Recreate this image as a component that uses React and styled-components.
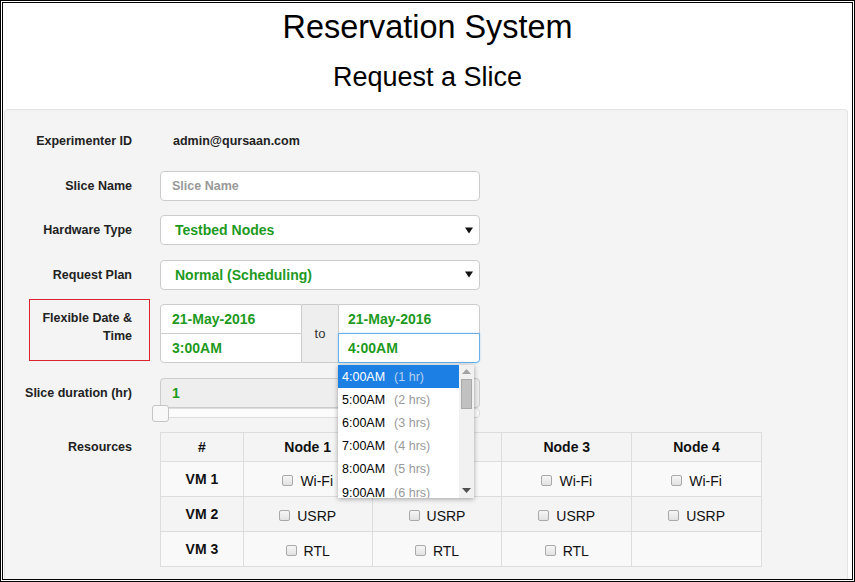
import React from "react";
import styled, { createGlobalStyle } from "styled-components";

const GREEN = "#1e9a1e";

const GlobalStyle = createGlobalStyle`
  html, body {
    margin: 0;
    padding: 0;
    background: #fff;
  }
  body {
    font-family: "Liberation Sans", Arial, sans-serif;
    color: #222;
  }
  * {
    box-sizing: border-box;
  }
`;

const Frame = styled.div`
  width: 855px;
  height: 582px;
  border: 3px double #000;
  display: flex;
  flex-direction: column;
  overflow: hidden;
  background: #fff;
`;

const Title = styled.h1`
  margin: 7px 0 0;
  font-size: 32.4px;
  line-height: 34px;
  font-weight: normal;
  text-align: center;
  color: #000;
`;

const Subtitle = styled.h2`
  margin: 18px 0 0;
  font-size: 27px;
  line-height: 30px;
  font-weight: normal;
  text-align: center;
  color: #000;
`;

const Panel = styled.div`
  flex: 1;
  margin: 17px 4px 3px 1px;
  background: #f4f4f4;
  border: 1px solid #e3e3e3;
  border-bottom: none;
  border-radius: 4px 4px 0 0;
  padding: 16px 0 0 24px;
`;

const Row = styled.div`
  display: grid;
  grid-template-columns: 121px 1fr;
  column-gap: 10px;
  align-items: ${(p) => (p.$top ? "start" : "center")};
  margin-bottom: ${(p) => p.$gap || "14.5px"};
  min-height: 30px;
`;

const Label = styled.div`
  display: flex;
  justify-content: flex-end;
  align-items: center;
  min-height: ${(p) => p.$h || "30px"};
  padding-right: 18px;
  font-size: 12.5px;
  font-weight: bold;
  white-space: nowrap;
  color: #222;
`;

const BoxedLabel = styled.div`
  height: 62px;
  margin-top: -5px;
  border: 1px solid #d9262e;
  padding: 9px 17px 0 0;
  text-align: right;
  font-size: 12.5px;
  line-height: 18px;
  font-weight: bold;
  color: #222;
`;

const Value = styled.div`
  padding-left: 13px;
  font-size: 12.5px;
  font-weight: bold;
  color: #222;
`;

const TextInput = styled.input`
  width: 320px;
  height: 30px;
  border: 1px solid #ccc;
  border-radius: 4px;
  background: #fff;
  padding: 0 11px;
  font-family: inherit;
  font-size: 12.5px;
  font-weight: bold;
  outline: none;
  &::placeholder {
    color: #999;
  }
`;

const Select = styled.div`
  width: 320px;
  height: 30px;
  border: 1px solid #ccc;
  border-radius: 4px;
  background: #fff;
  display: flex;
  align-items: center;
  justify-content: space-between;
  padding: 0 6px 0 14px;
  font-size: 14px;
  font-weight: bold;
  color: ${GREEN};
`;

const Caret = () => (
  <svg width="8" height="7" viewBox="0 0 8 7">
    <path d="M0 0.5 L8 0.5 L4 6.5 Z" fill="#111" />
  </svg>
);

const DateGroup = styled.div`
  display: flex;
  width: 320px;
`;

const DateCol = styled.div`
  position: relative;
  display: flex;
  flex-direction: column;
  width: 142px;
`;

const DateField = styled.div`
  position: relative;
  height: 30px;
  margin-top: ${(p) => (p.$second ? "-1px" : "0")};
  border: 1px solid ${(p) => (p.$focus ? "#66afe9" : "#ccc")};
  border-radius: ${(p) => p.$radius || "0"};
  background: #fff;
  display: flex;
  align-items: center;
  padding-left: ${(p) => p.$pad || "11px"};
  font-size: 14px;
  font-weight: bold;
  color: ${GREEN};
  z-index: ${(p) => (p.$focus ? 2 : 1)};
  box-shadow: ${(p) => (p.$focus ? "0 0 2px rgba(102,175,233,0.5)" : "none")};
`;

const Addon = styled.div`
  width: 36px;
  background: #eee;
  border-top: 1px solid #ccc;
  border-bottom: 1px solid #ccc;
  display: flex;
  align-items: center;
  justify-content: center;
  font-size: 13px;
  color: #333;
`;

const Menu = styled.div`
  position: absolute;
  top: 61px;
  left: 0;
  width: 136px;
  height: 133px;
  background: #fff;
  box-shadow: 0 1px 5px rgba(0, 0, 0, 0.35);
  display: flex;
  overflow: hidden;
  z-index: 10;
`;

const MenuList = styled.div`
  flex: 1;
`;

const MenuItem = styled.div`
  height: 23.2px;
  display: flex;
  align-items: center;
  padding-left: 4px;
  font-size: 12.5px;
  white-space: nowrap;
  background: ${(p) => (p.$active ? "#1c7fe4" : "transparent")};
  color: ${(p) => (p.$active ? "#fff" : "#000")};
`;

const Hours = styled.span`
  margin-left: 9px;
  color: ${(p) => (p.$active ? "#b8d0ef" : "#999")};
`;

const Scrollbar = styled.div`
  position: relative;
  width: 15px;
  background: #f1f1f1;
  display: flex;
  flex-direction: column;
  align-items: center;
`;

const Thumb = styled.div`
  position: absolute;
  top: 14px;
  left: 2px;
  width: 11px;
  height: 30px;
  background: #c1c1c1;
  border: 1px solid #a9a9a9;
`;

const Arrow = ({ up, color }) => (
  <svg width="9" height="5" viewBox="0 0 9 5" style={{ margin: up ? "4px 0 0" : "auto 0 5px" }}>
    <path d={up ? "M0 5 L9 5 L4.5 0 Z" : "M0 0 L9 0 L4.5 5 Z"} fill={color} />
  </svg>
);

const Duration = styled.div`
  width: 320px;
`;

const DurationInput = styled.div`
  height: 30px;
  border: 1px solid #ccc;
  border-radius: 4px;
  background: #eee;
  display: flex;
  align-items: center;
  padding-left: 11px;
  font-size: 14px;
  font-weight: bold;
  color: ${GREEN};
`;

const Track = styled.div`
  position: relative;
  height: 10px;
  border: 1px solid #ddd;
  border-radius: 4px;
  background: #fcfcfc;
`;

const Handle = styled.div`
  position: absolute;
  left: -9px;
  top: -4px;
  width: 17px;
  height: 17px;
  border: 1px solid #c5c5c5;
  border-radius: 3px;
  background: #f8f8f8;
`;

const Table = styled.table`
  border-collapse: collapse;
  width: 602px;
  font-size: 14px;
  color: #111;
`;

const Th = styled.th`
  width: ${(p) => p.$w || "auto"};
  height: 29px;
  padding: 0;
  border: 1px solid #ddd;
  text-align: center;
  font-weight: bold;
`;

const Tr = styled.tr`
  background: ${(p) => (p.$odd ? "#f9f9f9" : "transparent")};
`;

const Td = styled.td`
  height: 35px;
  padding: 0;
  border: 1px solid #ddd;
  text-align: center;
  vertical-align: middle;
  font-weight: ${(p) => (p.$bold ? "bold" : "normal")};
`;

const Check = styled.label`
  display: inline-flex;
  align-items: center;
  gap: 7px;
  padding-top: 4px;
`;

const Box = styled.span`
  display: inline-block;
  width: 11px;
  height: 11px;
  border: 1px solid #a9a9a9;
  border-radius: 2px;
  background: linear-gradient(#f6f6f6, #e2e2e2);
`;

const options = [
  ["4:00AM", "(1 hr)"],
  ["5:00AM", "(2 hrs)"],
  ["6:00AM", "(3 hrs)"],
  ["7:00AM", "(4 hrs)"],
  ["8:00AM", "(5 hrs)"],
  ["9:00AM", "(6 hrs)"],
];

const resources = [
  ["VM 1", ["Wi-Fi", "Wi-Fi", "Wi-Fi", "Wi-Fi"]],
  ["VM 2", ["USRP", "USRP", "USRP", "USRP"]],
  ["VM 3", ["RTL", "RTL", "RTL", null]],
];

const App = () => (
  <Frame>
    <GlobalStyle />
    <Title>Reservation System</Title>
    <Subtitle>Request a Slice</Subtitle>
    <Panel>
      <Row>
        <Label>Experimenter ID</Label>
        <Value>admin@qursaan.com</Value>
      </Row>
      <Row>
        <Label>Slice Name</Label>
        <TextInput placeholder="Slice Name" />
      </Row>
      <Row>
        <Label>Hardware Type</Label>
        <Select>
          Testbed Nodes
          <Caret />
        </Select>
      </Row>
      <Row>
        <Label>Request Plan</Label>
        <Select>
          Normal (Scheduling)
          <Caret />
        </Select>
      </Row>
      <Row $top>
        <BoxedLabel>Flexible Date &amp; Time</BoxedLabel>
        <DateGroup>
          <DateCol>
            <DateField $radius="4px 0 0 0">21-May-2016</DateField>
            <DateField $second $radius="0 0 0 4px">3:00AM</DateField>
          </DateCol>
          <Addon>to</Addon>
          <DateCol>
            <DateField $radius="0 4px 0 0" $pad="9px">21-May-2016</DateField>
            <DateField $second $focus $radius="0 0 4px 0" $pad="9px">4:00AM</DateField>
            <Menu>
              <MenuList>
                {options.map(([time, hrs], i) => (
                  <MenuItem key={time} $active={i === 0}>
                    {time}
                    <Hours $active={i === 0}>{hrs}</Hours>
                  </MenuItem>
                ))}
              </MenuList>
              <Scrollbar>
                <Arrow up color="#a3a3a3" />
                <Thumb />
                <Arrow color="#505050" />
              </Scrollbar>
            </Menu>
          </DateCol>
        </DateGroup>
      </Row>
      <Row $top $gap="14.5px">
        <Label>Slice duration (hr)</Label>
        <Duration>
          <DurationInput>1</DurationInput>
          <Track>
            <Handle />
          </Track>
        </Duration>
      </Row>
      <Row $top>
        <Label $h="29px">Resources</Label>
        <Table>
          <thead>
            <tr>
              <Th $w="83px">#</Th>
              <Th $w="129px">Node 1</Th>
              <Th $w="130px">Node 2</Th>
              <Th $w="130px">Node 3</Th>
              <Th $w="130px">Node 4</Th>
            </tr>
          </thead>
          <tbody>
            {resources.map(([vm, items], r) => (
              <Tr key={vm} $odd={r % 2 === 0}>
                <Td $bold>{vm}</Td>
                {items.map((item, c) => (
                  <Td key={c}>
                    {item && (
                      <Check>
                        <Box />
                        {item}
                      </Check>
                    )}
                  </Td>
                ))}
              </Tr>
            ))}
          </tbody>
        </Table>
      </Row>
    </Panel>
  </Frame>
);

export default App;
